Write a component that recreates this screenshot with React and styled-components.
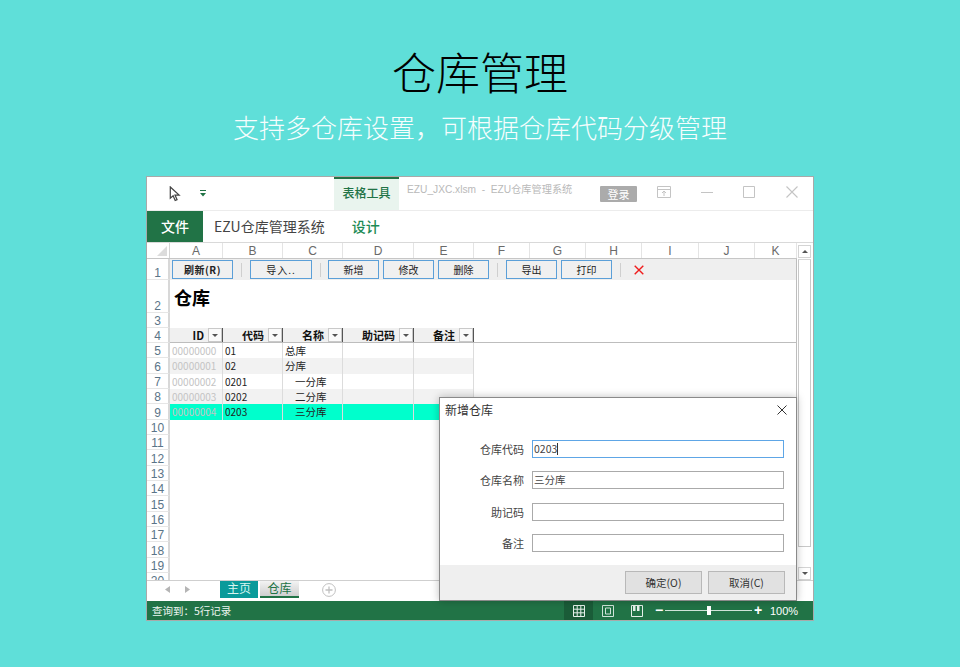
import React from "react";
import styled, { createGlobalStyle } from "styled-components";

const CJK = `"Noto Sans CJK SC", "Liberation Sans", sans-serif`;
const LATIN = `"Liberation Sans", "Noto Sans CJK SC", sans-serif`;

const GlobalStyle = createGlobalStyle`
  html, body { margin: 0; padding: 0; }
  body { background: #5fdfd9; font-family: ${CJK}; }
`;

const Page = styled.div`
  width: 960px;
  height: 667px;
  background: #5fdfd9;
  overflow: hidden;
  display: flex;
  flex-direction: column;
  align-items: center;
`;
const Title = styled.h1`
  margin: 42px 0 0;
  height: 58px;
  font-size: 44px;
  line-height: 58px;
  font-weight: 300;
  color: #000;
`;
const Subtitle = styled.p`
  margin: 9px 0 0;
  height: 36px;
  font-size: 26px;
  line-height: 36px;
  font-weight: 300;
  color: #f6fdfd;
`;

const Window = styled.div`
  position: relative;
  box-sizing: border-box;
  width: 668px;
  height: 445px;
  margin-top: 31px;
  background: #fff;
  border: 1px solid #a9a9a9;
  display: flex;
  flex-direction: column;
`;

/* title bar */
const TitleBar = styled.div`
  height: 34px;
  flex: none;
  display: flex;
  box-sizing: border-box;
  border-bottom: 1px solid #ececec;
`;
const QuickAccess = styled.div`
  width: 187px;
  display: flex;
  align-items: center;
  padding-left: 22px;
  gap: 19px;
  box-sizing: border-box;
`;
const ToolTab = styled.div`
  width: 65px;
  background: #e9f4ee;
  border-top: 2px solid #217346;
  box-sizing: border-box;
  text-align: center;
  font-size: 12px;
  font-weight: 500;
  line-height: 28px;
  color: #217346;
`;
const DocName = styled.div`
  width: 201px;
  padding-left: 8px;
  box-sizing: border-box;
  font-family: ${LATIN};
  font-size: 10.2px;
  line-height: 26px;
  color: #b9b9b9;
  white-space: pre;
`;
const LoginBadge = styled.div`
  width: 37px;
  height: 16px;
  margin: 9px 0 0 0;
  background: #ababab;
  color: #fff;
  font-size: 11px;
  line-height: 16px;
  text-align: center;
  border-radius: 1px;
`;
const WinIcons = styled.div`
  flex: 1;
  display: flex;
  align-items: center;
  padding: 0 0 3px 20px;
  gap: 30px;
`;

/* ribbon tabs */
const Ribbon = styled.div`
  height: 32px;
  flex: none;
  display: flex;
  box-sizing: border-box;
  border-bottom: 1px solid #d9d9d9;
`;
const FileTab = styled.div`
  width: 56px;
  background: #217346;
  color: #fff;
  font-size: 14px;
  font-weight: 500;
  line-height: 31px;
  text-align: center;
`;
const RibbonTab = styled.div`
  padding: 0 0 0 ${(p) => p.$pad}px;
  font-size: 14px;
  font-weight: ${(p) => p.$weight || 400};
  line-height: 31px;
  color: ${(p) => p.$color || "#444"};
`;

/* sheet */
const SheetArea = styled.div`
  flex: 1;
  min-height: 0;
  display: flex;
`;
const Sheet = styled.div`
  width: 650px;
  display: flex;
  flex-direction: column;
  overflow: hidden;
`;
const ColHeads = styled.div`
  height: 16px;
  flex: none;
  display: flex;
  box-sizing: border-box;
  border-bottom: 1px solid #c6c6c6;
  background: #fff;
`;
const Corner = styled.div`
  width: 23px;
  flex: none;
  position: relative;
  border-right: 1px solid #d4d4d4;
  box-sizing: border-box;
  &::after {
    content: "";
    position: absolute;
    right: 2px;
    bottom: 2px;
    border-style: solid;
    border-width: 0 0 10px 10px;
    border-color: transparent transparent #dcdcdc transparent;
  }
`;
const ColHead = styled.div`
  box-sizing: border-box;
  flex: none;
  font-family: ${LATIN};
  font-size: 12px;
  line-height: 17px;
  text-align: center;
  color: #6a6a6a;
  border-right: 1px solid #e4e4e4;
`;
const Row = styled.div`
  display: flex;
  flex: none;
  height: ${(p) => p.$h}px;
`;
const RowNum = styled.div`
  width: 23px;
  flex: none;
  box-sizing: border-box;
  border-right: 2px solid #d8d8d8;
  border-bottom: 1px solid #e6e6e6;
  font-family: ${LATIN};
  font-size: 12px;
  line-height: 1;
  color: #5a7488;
  display: flex;
  align-items: flex-end;
  justify-content: center;
`;
const RowBody = styled.div`
  flex: 1;
  display: flex;
  align-items: ${(p) => p.$align || "stretch"};
  background: ${(p) => p.$bg || "#fff"};
  border-right: 1px solid #bdbdbd;
  border-bottom: ${(p) => (p.$line ? "1px solid #bdbdbd" : "none")};
  box-sizing: border-box;
`;
const ToolBtn = styled.div`
  box-sizing: border-box;
  flex: none;
  width: ${(p) => p.$w}px;
  height: 19px;
  margin-left: ${(p) => p.$ml}px;
  border: 1px solid #5b9fd8;
  background: #f0f0f0;
  font-size: 10px;
  line-height: 17px;
  text-align: center;
  color: #222;
  font-weight: ${(p) => (p.$bold ? 700 : 400)};
  letter-spacing: ${(p) => p.$spacing || 0}px;
`;
const ToolSep = styled.div`
  flex: none;
  width: 1px;
  height: 14px;
  margin-left: ${(p) => p.$ml}px;
  background: #cfcfcf;
`;
const SheetTitle = styled.div`
  padding: 4px 0 0 4px;
  font-size: 18px;
  line-height: 26px;
  font-weight: 700;
  color: #000;
`;
const HeadCell = styled.div`
  box-sizing: border-box;
  flex: none;
  width: ${(p) => p.$w}px;
  background: #f0f0f0;
  border-right: 1px solid #555;
  display: flex;
  align-items: center;
  justify-content: flex-end;
  font-size: 11px;
  font-weight: 700;
  color: #111;
  gap: 4px;
`;
const FilterBtn = styled.div`
  box-sizing: border-box;
  width: 14px;
  height: 14px;
  background: #fafafa;
  border: 1px solid #c9c9c9;
  display: flex;
  align-items: center;
  justify-content: center;
  &::after {
    content: "";
    border-style: solid;
    border-width: 3px 3px 0;
    border-color: #555 transparent transparent;
  }
`;
const Cell = styled.div`
  box-sizing: border-box;
  flex: none;
  width: ${(p) => p.$w}px;
  border-right: 1px solid #dcdcdc;
  padding-left: ${(p) => p.$indent || 2}px;
  font-size: ${(p) => p.$size || 10.5}px;
  line-height: 15px;
  color: ${(p) => p.$color || "#222"};
  white-space: nowrap;
  background: ${(p) => p.$bg};
`;

/* scrollbar */
const Scrollbar = styled.div`
  width: 16px;
  flex: none;
  display: flex;
  flex-direction: column;
  padding: 2px 0 0 1px;
  box-sizing: border-box;
`;
const ScrollBtn = styled.div`
  box-sizing: border-box;
  height: 13px;
  width: 13px;
  flex: none;
  border: 1px solid #d4d4d4;
  display: flex;
  align-items: center;
  justify-content: center;
  &::after {
    content: "";
    border-style: solid;
    border-width: ${(p) => (p.$up ? "0 3px 3px" : "3px 3px 0")};
    border-color: ${(p) =>
      p.$up
        ? "transparent transparent #555"
        : "#555 transparent transparent"};
  }
`;
const ScrollTrack = styled.div`
  flex: 1;
  width: 13px;
  box-sizing: border-box;
  margin: 1px 0 ${(p) => p.$mb}px;
  border: 1px solid #c8c8c8;
  border-top-color: #d8d8d8;
`;

/* sheet tabs */
const TabsBar = styled.div`
  height: 21px;
  flex: none;
  display: flex;
  align-items: flex-start;
  border-top: 1px solid #cfcfcf;
  box-sizing: border-box;
`;
const TabArrows = styled.div`
  width: 73px;
  height: 17px;
  display: flex;
  align-items: center;
  gap: 15px;
  padding-left: 18px;
  box-sizing: border-box;
  flex: none;
`;
const SheetTab = styled.div`
  box-sizing: border-box;
  width: ${(p) => p.$w}px;
  height: 17px;
  flex: none;
  margin-left: ${(p) => p.$ml || 0}px;
  background: ${(p) => p.$bg};
  color: ${(p) => p.$color};
  font-size: 12px;
  line-height: 14px;
  text-align: center;
  border-bottom: ${(p) => (p.$active ? "2px solid #217346" : "none")};
`;

/* status bar */
const StatusBar = styled.div`
  height: 19px;
  flex: none;
  display: flex;
  align-items: center;
  background: #217346;
  color: #eef6f1;
  font-size: 10.5px;
  padding-left: 5px;
`;
const StatusLeft = styled.div`
  width: 412px;
  flex: none;
`;
const ViewBtn = styled.div`
  width: 29px;
  height: 19px;
  display: flex;
  align-items: center;
  justify-content: center;
  background: ${(p) => (p.$on ? "#1a5c38" : "transparent")};
`;
const ZoomBox = styled.div`
  display: flex;
  align-items: center;
  margin-left: 4px;
  gap: 2px;
  font-family: ${LATIN};
  font-size: 11px;
  color: #fff;
`;
const ZoomSign = styled.span`
  width: 8px;
  text-align: center;
  font-size: 14px;
  font-weight: 700;
  line-height: 19px;
`;
const ZoomValue = styled.span`
  margin-left: 6px;
`;
const ZoomTrack = styled.div`
  position: relative;
  width: 87px;
  height: 1px;
  background: #cfe3d8;
  &::after {
    content: "";
    position: absolute;
    left: 42px;
    top: -4px;
    width: 4px;
    height: 9px;
    background: #fff;
  }
`;

/* dialog */
const Dialog = styled.div`
  position: absolute;
  left: 292px;
  top: 220px;
  width: 358px;
  height: 204px;
  box-sizing: border-box;
  background: #fff;
  border: 1px solid #8a8a8a;
  box-shadow: 0 0 8px rgba(0, 0, 0, 0.25);
  display: flex;
  flex-direction: column;
`;
const DialogHead = styled.div`
  height: 27px;
  flex: none;
  display: flex;
  align-items: center;
  justify-content: space-between;
  box-sizing: border-box;
  padding: 0 9px 4px 5px;
  font-size: 12px;
  color: #333;
`;
const DialogBody = styled.div`
  flex: 1;
  display: flex;
  flex-direction: column;
  gap: 13.33px;
  padding-top: 15px;
`;
const Field = styled.div`
  display: flex;
  align-items: center;
  height: 18px;
`;
const FieldLabel = styled.div`
  width: 84px;
  flex: none;
  text-align: right;
  font-size: 11px;
  color: #444;
`;
const FieldInput = styled.div`
  box-sizing: border-box;
  width: 252px;
  height: 18px;
  margin-left: 8px;
  padding-left: 1px;
  border: 1px solid ${(p) => (p.$focus ? "#5ea6e6" : "#aaa")};
  font-size: 10.5px;
  line-height: 15px;
  color: #444;
  background: #fff;
`;
const Caret = styled.span`
  display: inline-block;
  width: 1px;
  height: 12px;
  background: #333;
  vertical-align: -2px;
`;
const DialogFoot = styled.div`
  height: 35px;
  flex: none;
  background: #efefef;
  display: flex;
  align-items: center;
  justify-content: flex-end;
  gap: 6px;
  padding-right: 11px;
`;
const DialogBtn = styled.div`
  box-sizing: border-box;
  width: 77px;
  height: 23px;
  border: 1px solid #b8b8b8;
  background: #e1e1e1;
  font-size: 10.5px;
  line-height: 21px;
  text-align: center;
  color: #333;
`;

const columns = [
  ["A", 53], ["B", 60], ["C", 60], ["D", 71], ["E", 60],
  ["F", 56], ["G", 56], ["H", 56], ["I", 57], ["J", 56], ["K", 42],
];
const headers = [
  ["ID", 53], ["代码", 60], ["名称", 60], ["助记码", 71], ["备注", 60],
];
const records = [
  ["00000000", "01", "总库", 2],
  ["00000001", "02", "分库", 2],
  ["00000002", "0201", "一分库", 12],
  ["00000003", "0202", "二分库", 12],
  ["00000004", "0203", "三分库", 12],
];

const Arrow = ({ left }) => (
  <svg width="5" height="7" viewBox="0 0 5 7">
    <path d={left ? "M5 0L0 3.5 5 7z" : "M0 0l5 3.5L0 7z"} fill="#b5b5b5" />
  </svg>
);

const rowColor = (i) => (i === 4 ? "#00ffcc" : i % 2 ? "#f2f2f2" : "#fff");

function App() {
  return (
    <Page>
      <GlobalStyle />
      <Title>仓库管理</Title>
      <Subtitle>支持多仓库设置，可根据仓库代码分级管理</Subtitle>
      <Window>
        <TitleBar>
          <QuickAccess>
            <svg width="12" height="16" viewBox="0 0 12 17">
              <path d="M1 1v12l3-2.6 2.2 5 2-.9-2.2-4.9h4.4z" fill="#fff" stroke="#444" strokeWidth="1.3" />
            </svg>
            <svg width="6" height="7" viewBox="0 0 6 7">
              <path d="M0 0h6v1H0zM0 3h6L3 6.5z" fill="#217346" />
            </svg>
          </QuickAccess>
          <ToolTab>表格工具</ToolTab>
          <DocName>EZU_JXC.xlsm  -  EZU仓库管理系统</DocName>
          <LoginBadge>登录</LoginBadge>
          <WinIcons>
            <svg width="14" height="12" viewBox="0 0 14 12" fill="none" stroke="#c4c4c4">
              <path d="M.5.5h13v11H.5zM.5 3.5h13M7 10V5M5 7l2-2 2 2" />
            </svg>
            <svg width="12" height="12" viewBox="0 0 12 12" stroke="#c4c4c4"><path d="M0 6.5h12" /></svg>
            <svg width="12" height="12" viewBox="0 0 12 12" fill="none" stroke="#c4c4c4"><path d="M.5.5h11v11H.5z" /></svg>
            <svg width="12" height="12" viewBox="0 0 12 12" stroke="#c4c4c4" strokeWidth="1.1" style={{ marginLeft: 1 }}>
              <path d="M.5.5l11 11M11.5.5l-11 11" />
            </svg>
          </WinIcons>
        </TitleBar>
        <Ribbon>
          <FileTab>文件</FileTab>
          <RibbonTab $pad={11}>EZU仓库管理系统</RibbonTab>
          <RibbonTab $pad={27} $color="#1c8a54" $weight={500}>设计</RibbonTab>
        </Ribbon>
        <SheetArea>
          <Sheet>
            <ColHeads>
              <Corner />
              {columns.map(([c, w]) => (
                <ColHead key={c} style={{ width: w }}>{c}</ColHead>
              ))}
            </ColHeads>
            <Row $h={21}>
              <RowNum>1</RowNum>
              <RowBody $bg="#efefef" $align="center">
                <ToolBtn $w={61} $ml={2} $bold $spacing={0.5}>刷新(R)</ToolBtn>
                <ToolSep $ml={8} />
                <ToolBtn $w={62} $ml={8} $spacing={1}>导入..</ToolBtn>
                <ToolSep $ml={8} />
                <ToolBtn $w={51} $ml={7}>新增</ToolBtn>
                <ToolBtn $w={51} $ml={4}>修改</ToolBtn>
                <ToolBtn $w={51} $ml={4}>删除</ToolBtn>
                <ToolSep $ml={8} />
                <ToolBtn $w={51} $ml={8}>导出</ToolBtn>
                <ToolBtn $w={51} $ml={4}>打印</ToolBtn>
                <ToolSep $ml={8} />
                <svg width="10" height="10" viewBox="0 0 10 10" stroke="#f01c1c" strokeWidth="1.4" style={{ marginLeft: 13 }}>
                  <path d="M.7.7l8.6 8.6M9.3.7L.7 9.3" />
                </svg>
              </RowBody>
            </Row>
            <Row $h={33}>
              <RowNum>2</RowNum>
              <RowBody><SheetTitle>仓库</SheetTitle></RowBody>
            </Row>
            <Row $h={15}>
              <RowNum>3</RowNum>
              <RowBody />
            </Row>
            <Row $h={15}>
              <RowNum>4</RowNum>
              <RowBody $line>
                {headers.map(([h, w]) => (
                  <HeadCell key={h} $w={w}>{h}<FilterBtn /></HeadCell>
                ))}
              </RowBody>
            </Row>
            {records.map(([id, code, name, indent], i) => (
              <Row key={id} $h={15.33}>
                <RowNum>{i + 5}</RowNum>
                <RowBody>
                  <Cell $w={53} $size={10} $color="#c4c4c4" $bg={rowColor(i)}>{id}</Cell>
                  <Cell $w={60} $size={10} $bg={rowColor(i)}>{code}</Cell>
                  <Cell $w={60} $indent={indent} $bg={rowColor(i)}>{name}</Cell>
                  <Cell $w={71} $bg={rowColor(i)} />
                  <Cell $w={60} $bg={rowColor(i)} />
                </RowBody>
              </Row>
            ))}
            {Array.from({ length: 11 }, (_, i) => (
              <Row key={i} $h={15.33}>
                <RowNum>{i + 10}</RowNum>
                <RowBody />
              </Row>
            ))}
          </Sheet>
          <Scrollbar>
            <ScrollBtn $up />
            <ScrollTrack $mb={20} />
            <ScrollBtn />
          </Scrollbar>
        </SheetArea>
        <TabsBar>
          <TabArrows>
            <Arrow left />
            <Arrow />
          </TabArrows>
          <SheetTab $w={38} $bg="#0a9a9a" $color="#d9f5f0">主页</SheetTab>
          <SheetTab $w={39} $ml={2} $bg="linear-gradient(#f3f3f3, #cfcfcf)" $color="#217346" $active>仓库</SheetTab>
          <svg width="14" height="14" viewBox="0 0 14 14" fill="none" stroke="#c0c0c0" style={{ marginLeft: 23, marginTop: 2 }}>
            <circle cx="7" cy="7" r="6.4" />
            <path d="M7 3.5v7M3.5 7h7" strokeWidth="1.3" />
          </svg>
        </TabsBar>
        <StatusBar>
          <StatusLeft>查询到：5行记录</StatusLeft>
          <ViewBtn $on>
            <svg width="12" height="12" viewBox="0 0 12 12" fill="none" stroke="#e5f0ea">
              <path d="M.5.5h11v11H.5zM4.2.5v11M7.8.5v11M.5 4.2h11M.5 7.8h11" />
            </svg>
          </ViewBtn>
          <ViewBtn>
            <svg width="12" height="12" viewBox="0 0 12 12" fill="none" stroke="#cfe3d8">
              <path d="M.5.5h11v11H.5zM3.5 3h5v6h-5z" />
            </svg>
          </ViewBtn>
          <ViewBtn>
            <svg width="12" height="12" viewBox="0 0 12 12" fill="none" stroke="#e5f0ea">
              <path d="M.5.5h11v11H.5z" />
              <path d="M2 1h2.5v5H2zM6 1h2.5v5H6z" fill="#e5f0ea" stroke="none" />
            </svg>
          </ViewBtn>
          <ZoomBox>
            <ZoomSign>−</ZoomSign>
            <ZoomTrack />
            <ZoomSign>+</ZoomSign>
            <ZoomValue>100%</ZoomValue>
          </ZoomBox>
        </StatusBar>
        <Dialog>
          <DialogHead>
            新增仓库
            <svg width="10" height="10" viewBox="0 0 10 10" stroke="#333">
              <path d="M.5.5l9 9M9.5.5l-9 9" />
            </svg>
          </DialogHead>
          <DialogBody>
            <Field><FieldLabel>仓库代码</FieldLabel><FieldInput $focus>0203<Caret /></FieldInput></Field>
            <Field><FieldLabel>仓库名称</FieldLabel><FieldInput>三分库</FieldInput></Field>
            <Field><FieldLabel>助记码</FieldLabel><FieldInput /></Field>
            <Field><FieldLabel>备注</FieldLabel><FieldInput /></Field>
          </DialogBody>
          <DialogFoot>
            <DialogBtn>确定(O)</DialogBtn>
            <DialogBtn>取消(C)</DialogBtn>
          </DialogFoot>
        </Dialog>
      </Window>
    </Page>
  );
}

export default App;
